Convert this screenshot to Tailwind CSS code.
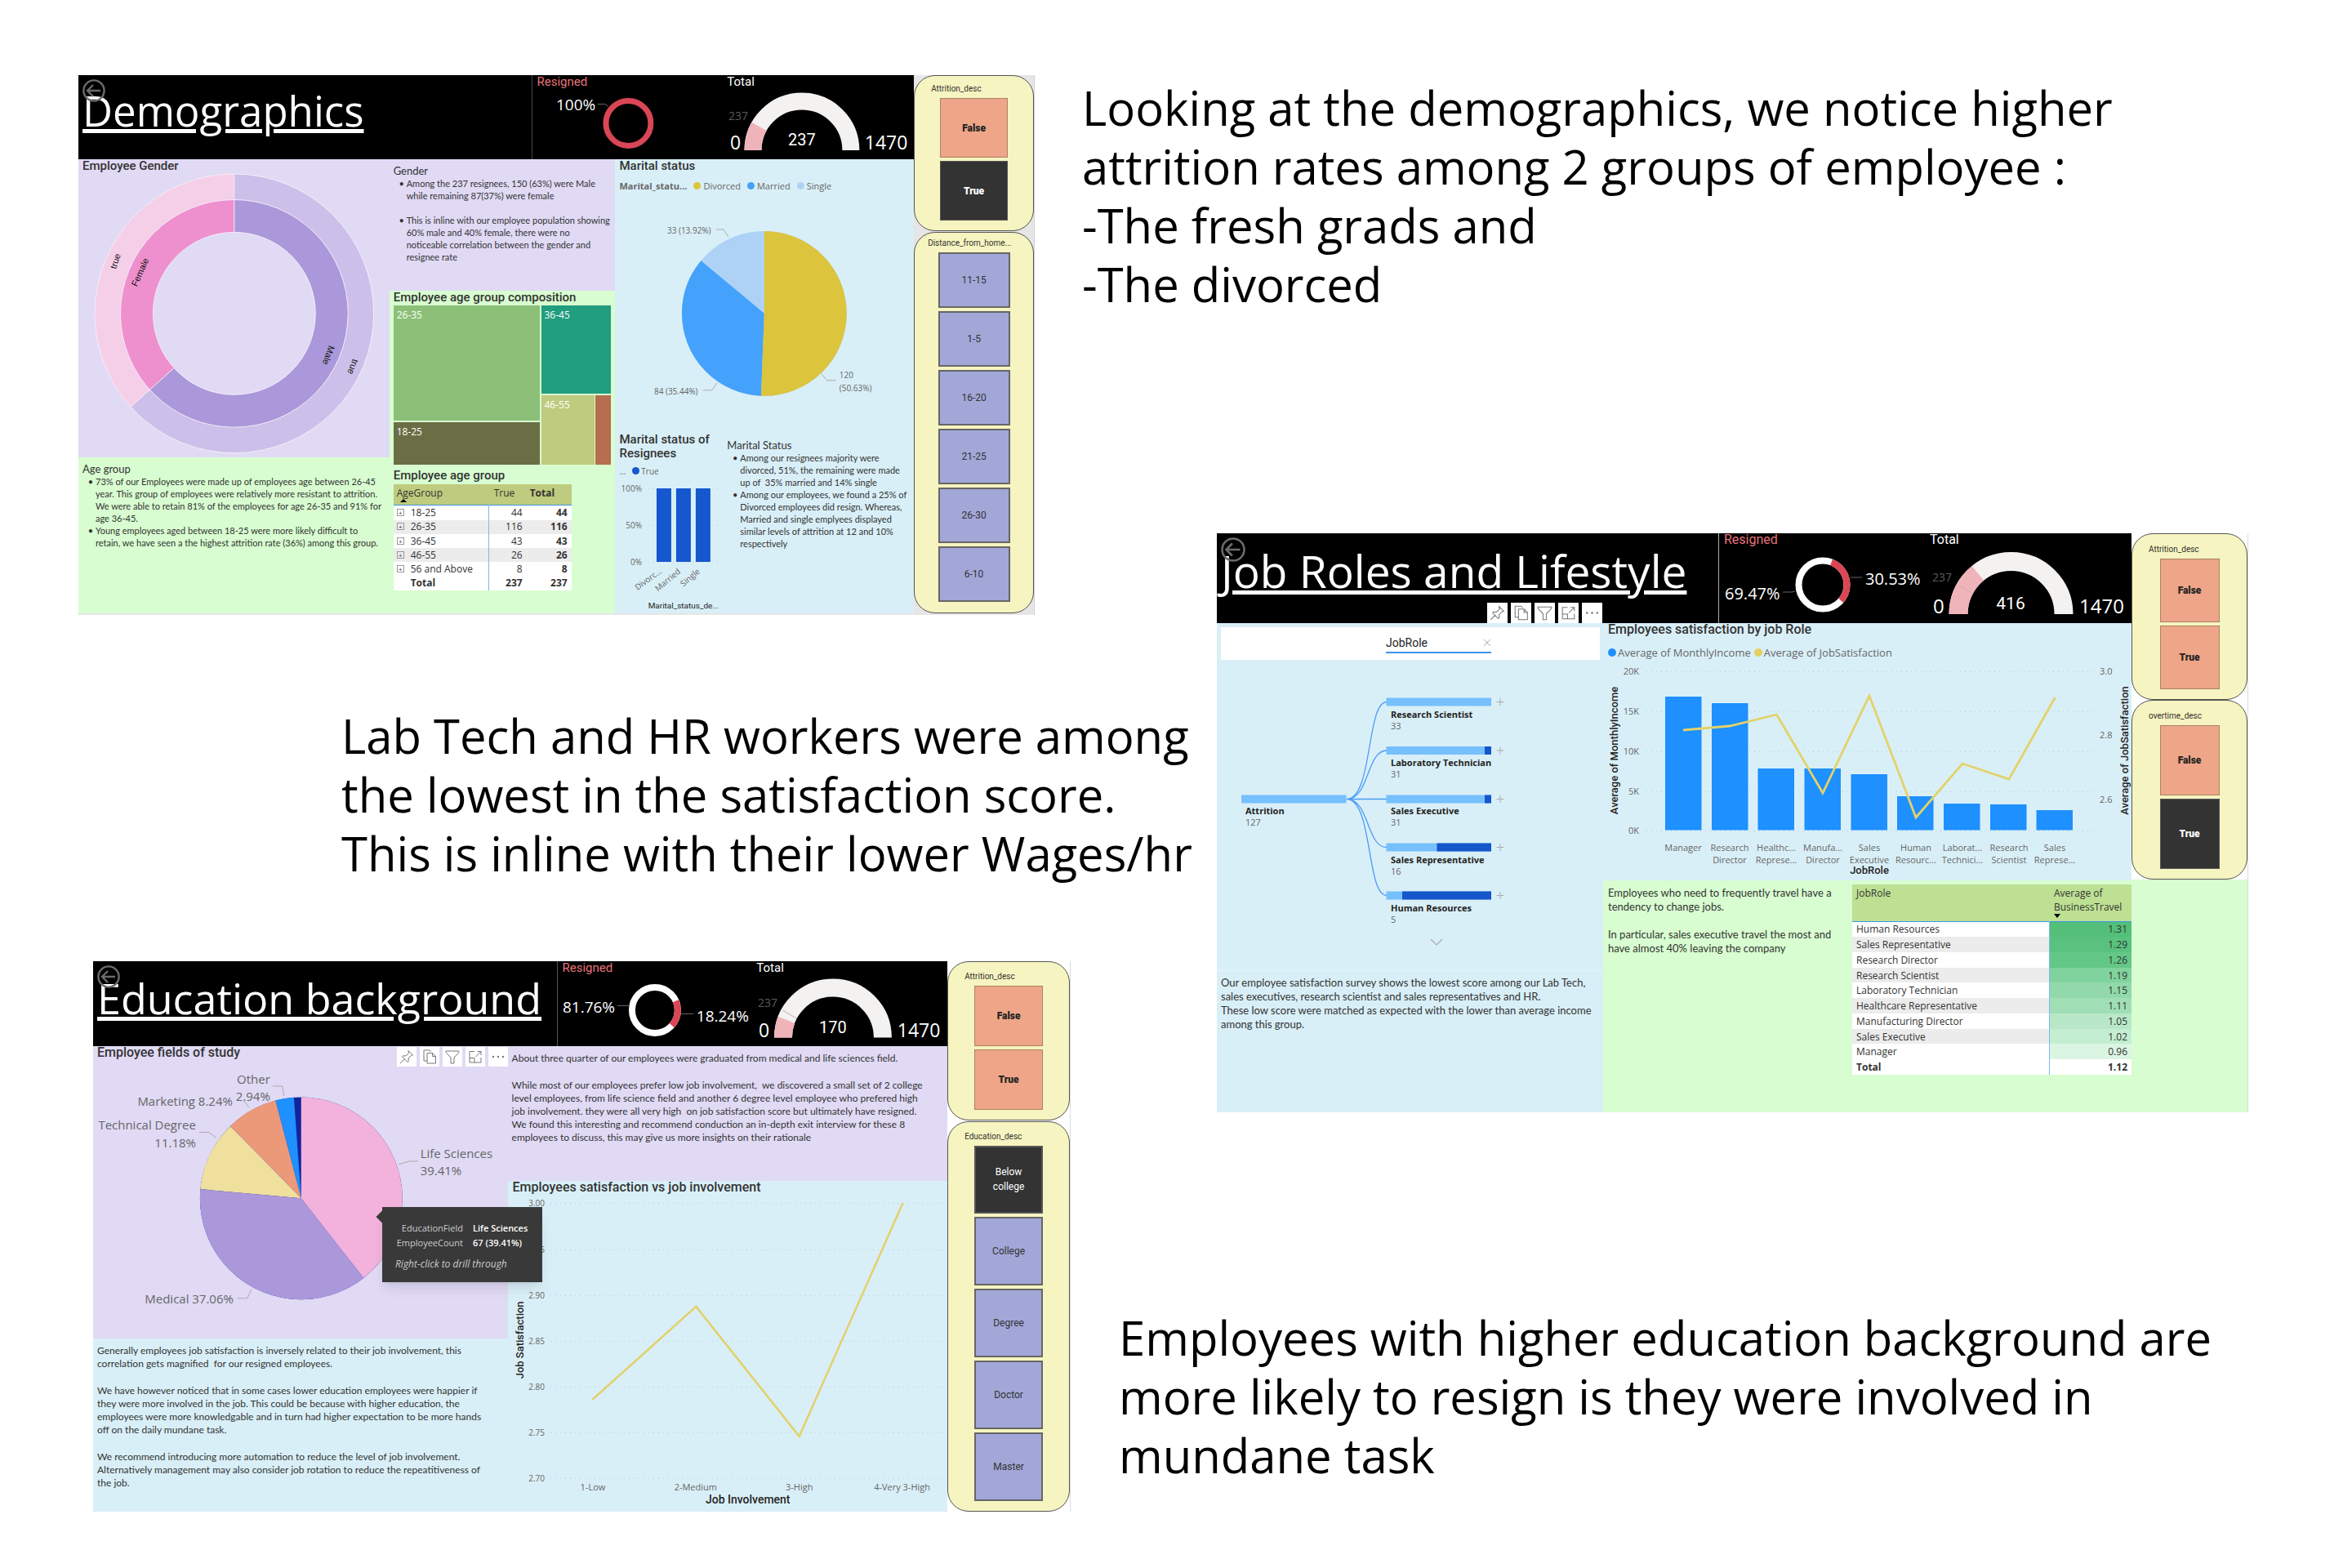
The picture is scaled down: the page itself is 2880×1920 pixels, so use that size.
<!DOCTYPE html>
<html lang="en">
<head>
<meta charset="utf-8">
<title>Employee attrition findings</title>
<script src="https://cdn.jsdelivr.net/npm/@tailwindcss/browser@4"></script>
</head>
<body class="bg-white font-['Open_Sans',sans-serif] text-[#333]">

<svg class="hidden" aria-hidden="true">
  <symbol id="back" viewBox="0 0 28 28"><g fill="none" stroke="#6b6b6b" stroke-width="2.4"><circle cx="14" cy="14" r="12.6"/><path d="M22 14H6.5M13 7l-7 7 7 7"/></g></symbol>
  <symbol id="pin" viewBox="0 0 24 24"><path fill="none" stroke="#777" d="M14 4.500l5.500 5.500-2 .5-3.500 3.500.2 3.500-1.200 1-6.500-6.500 1-1.200 3.500.2 3.500-3.500zM9.500 14.500L4 20"/></symbol>
  <symbol id="copy" viewBox="0 0 24 24"><path fill="none" stroke="#777" d="M9 17H5V4h7l2 2M9 7.500h6.500l4 4V20H9zM15.500 7.500v4h4"/></symbol>
  <symbol id="filter" viewBox="0 0 24 24"><path fill="none" stroke="#777" d="M4 5h16v1.500l-6 6.500v7h-4v-7L4 6.500z"/></symbol>
  <symbol id="focus" viewBox="0 0 24 24"><path fill="none" stroke="#777" d="M11 5.500H5V19h14v-6M5 13.500h6V19M12.500 12L19 5.500M14.500 5.500H19V10"/></symbol>
  <symbol id="more" viewBox="0 0 24 24"><g fill="#777"><circle cx="6" cy="12" r="1.200"/><circle cx="12" cy="12" r="1.200"/><circle cx="18" cy="12" r="1.200"/></g></symbol>
</svg>

<main class="grid min-h-screen grid-cols-[minmax(0,1325fr)_minmax(0,1555fr)]">

<div class="flex flex-col">

  <!-- Demographics -->
  <section class="mt-[92px] mr-[58px] ml-24 grid grid-cols-[minmax(0,1024fr)_minmax(0,147fr)] border-r border-[#d0d0d0] bg-[#e6e6e6] pb-[2px]">
    <div class="flex flex-col">
      <header class="grid grid-cols-[minmax(0,556fr)_minmax(0,233fr)_minmax(0,235fr)] bg-black text-white">
        <div class="relative border-r border-[#444] pl-[5px]">
          <h1 class="text-[51px] leading-[86px] whitespace-nowrap underline decoration-[5px] underline-offset-[3px]">Demographics</h1>
          <button aria-label="Back" class="absolute top-[5px] left-[5px] size-7"><svg class="size-7"><use href="#back"/></svg></button>
        </div>
        <div>
          <h2 class="pl-1.5 font-['Roboto',sans-serif] text-[15px] leading-4 text-[#e8737a]">Resigned</h2>
          <svg class="block w-full" viewBox="652 108 233 87">
            <text x="681" y="135" font-size="19" fill="#fff">100%</text>
            <path d="M732 127.500h9l4 3" fill="none" stroke="#666"/>
            <circle cx="769.500" cy="151" r="27.500" fill="none" stroke="#da4656" stroke-width="7"/>
          </svg>
        </div>
        <div>
          <h2 class="pl-1.5 font-['Roboto',sans-serif] text-[15px] leading-4">Total</h2>
          <svg class="block w-full" viewBox="885 108 235 87">
            <g fill="none" stroke-width="21"><path d="M923 184a60 60 0 0 1 120 0" stroke="#f3f2f1"/><path d="M923 184a60 60 0 0 1 120 0" stroke="#efb4ba" pathLength="100" stroke-dasharray="16.100 100"/></g>
            <text x="893" y="147" font-size="14" fill="#5a5a5a">237</text>
            <g fill="#fff"><text x="895" y="183" font-size="23">0</text><text x="1060" y="183" font-size="23">1470</text>
            <text x="983" y="178" font-size="20" text-anchor="middle" class="font-['Roboto',sans-serif]">237</text></g>
          </svg>
        </div>
      </header>

      <div class="grid flex-1 grid-cols-[minmax(0,381fr)_minmax(0,277fr)_minmax(0,366fr)] text-[11px] leading-[15px]">
        <div class="flex flex-col">
          <div class="bg-[#e0daf5]">
            <h2 class="pl-[5px] font-['Roboto',sans-serif] text-[15px] leading-4 font-medium">Employee Gender</h2>
            <svg class="block w-full" viewBox="96 211 381 349">
              <g transform="translate(287 384) rotate(-90)" fill="none">
                <circle r="155" stroke="#ccbfe9" stroke-width="32"/>
                <circle r="155" stroke="#f5cfe8" stroke-width="32" pathLength="100" stroke-dasharray="36.700 100" stroke-dashoffset="-63.300"/>
                <circle r="119.500" stroke="#ab98da" stroke-width="40"/>
                <circle r="119.500" stroke="#ee90cd" stroke-width="40" pathLength="100" stroke-dasharray="36.700 100" stroke-dashoffset="-63.300"/>
                <g stroke="#f6ecfa"><circle r="171"/><circle r="139.500"/><circle r="99.500"/><path d="M99.500 0H171"/></g>
              </g>
              <path d="M213 451L160 498.500" stroke="#f6ecfa"/>
              <g font-size="11" fill="#111" text-anchor="middle" class="font-['Liberation_Sans',sans-serif]">
                <text transform="translate(175 335) rotate(-66)">Female</text>
                <text transform="translate(145 321) rotate(-72)">true</text>
                <text transform="translate(399 434) rotate(110)">Male</text>
                <text transform="translate(429 448) rotate(110)">true</text>
              </g>
            </svg>
          </div>
          <div class="flex-1 bg-[#d8fdd0] pt-1.5 pl-[5px] font-['Lato',sans-serif]">
            <h3 class="text-[13px] leading-4">Age group</h3>
            <ul class="list-['•_'] pl-4 whitespace-nowrap">
              <li>73% of our Employees were made up of employees age between 26-45<br>year. This group of employees were relatively more resistant to attrition.<br>We were able to retain 81% of the employees for age 26-35 and 91% for<br>age 36-45.</li>
              <li>Young employees aged between 18-25 were more likely difficult to<br>retain, we have seen a the highest attrition rate (36%) among this group.</li>
            </ul>
          </div>
        </div>

        <div class="flex flex-col">
          <div class="bg-[#e0daf5] pt-1.5 pb-[34px] pl-[5px] font-['Lato',sans-serif]">
            <h3 class="text-[13px] leading-4">Gender</h3>
            <ul class="list-['•_'] pl-4 whitespace-nowrap">
              <li>Among the 237 resignees, 150 (63%) were Male<br>while remaining 87(37%) were female</li>
              <li class="mt-[15px]">This is inline with our employee population showing<br>60% male and 40% female, there were no<br>noticeable correlation between the gender and<br>resignee rate</li>
            </ul>
          </div>
          <div class="flex-1 bg-[#d8fdd0] px-[5px]">
            <h2 class="pb-0.5 font-['Roboto',sans-serif] text-[15px] leading-4 font-medium whitespace-nowrap">Employee age group composition</h2>
            <div class="grid h-[195px] grid-cols-[179fr_86fr] gap-0.5 text-[12px] leading-6 text-white">
              <div class="grid grid-rows-[141fr_52fr] gap-0.5">
                <div class="bg-[#8cc078] pl-1">26-35</div>
                <div class="bg-[#6b6d45] pl-1">18-25</div>
              </div>
              <div class="grid grid-rows-[109fr_85fr] gap-0.5">
                <div class="bg-[#219d7f] pl-1">36-45</div>
                <div class="grid grid-cols-[66fr_19fr] gap-px"><div class="bg-[#bfcb7e] pl-1">46-55</div><div class="bg-[#b66d50]"></div></div>
              </div>
            </div>
            <h2 class="pt-[5px] pb-[3px] font-['Roboto',sans-serif] text-[15px] leading-4 font-medium">Employee age group</h2>
            <table class="h-[130px] w-[218px] table-fixed bg-white text-[12px] leading-[14px]">
              <colgroup><col class="w-[117px]"><col class="w-[46px]"><col class="w-[55px]"></colgroup>
              <thead><tr class="h-[26px] border-b border-[#3a96e8] bg-[#bfcb7e] text-left align-top">
                <th class="pt-1 pl-1 font-normal">AgeGroup<svg class="ml-1 block h-1 w-2" viewBox="0 0 8 4"><path d="M0 4l4-4 4 4z"/></svg></th><th class="pt-1 pl-1.5 font-normal">True</th><th class="pt-1 pl-1 font-bold">Total</th></tr></thead>
              <tbody class="text-right">
                <tr><th class="border-r border-[#7db9ee] pl-1 text-left font-normal"><span class="mr-2 inline-block size-[9px] border border-[#999] text-center align-[1px] text-[8px] leading-[7px]">+</span>18-25</th><td class="pr-[5px]">44</td><td class="pr-[5px] font-bold">44</td></tr>
                <tr class="bg-[#ececec]"><th class="border-r border-[#7db9ee] pl-1 text-left font-normal"><span class="mr-2 inline-block size-[9px] border border-[#999] text-center align-[1px] text-[8px] leading-[7px]">+</span>26-35</th><td class="pr-[5px]">116</td><td class="pr-[5px] font-bold">116</td></tr>
                <tr><th class="border-r border-[#7db9ee] pl-1 text-left font-normal"><span class="mr-2 inline-block size-[9px] border border-[#999] text-center align-[1px] text-[8px] leading-[7px]">+</span>36-45</th><td class="pr-[5px]">43</td><td class="pr-[5px] font-bold">43</td></tr>
                <tr class="bg-[#ececec]"><th class="border-r border-[#7db9ee] pl-1 text-left font-normal"><span class="mr-2 inline-block size-[9px] border border-[#999] text-center align-[1px] text-[8px] leading-[7px]">+</span>46-55</th><td class="pr-[5px]">26</td><td class="pr-[5px] font-bold">26</td></tr>
                <tr><th class="border-r border-[#7db9ee] pl-1 text-left font-normal whitespace-nowrap"><span class="mr-2 inline-block size-[9px] border border-[#999] text-center align-[1px] text-[8px] leading-[7px]">+</span>56 and Above</th><td class="pr-[5px]">8</td><td class="pr-[5px] font-bold">8</td></tr>
                <tr class="font-bold"><th class="border-r border-[#7db9ee] pl-[21px] text-left">Total</th><td class="pr-[5px]">237</td><td class="pr-[5px]">237</td></tr>
              </tbody>
            </table>
          </div>
        </div>

        <div class="bg-[#d9eff7]">
          <h2 class="pl-[5px] font-['Roboto',sans-serif] text-[15px] leading-4 font-medium">Marital status</h2>
          <div class="mt-[9px] flex items-center gap-2 pl-[5px] text-[11px] leading-4 whitespace-nowrap text-[#666]">
            <b>Marital_statu...</b>
            <span class="flex items-center gap-[3px]"><i class="size-[9px] rounded-full bg-[#dcc43c]"></i>Divorced</span>
            <span class="flex items-center gap-[3px]"><i class="size-[9px] rounded-full bg-[#45a2fc]"></i>Married</span>
            <span class="flex items-center gap-[3px]"><i class="size-[9px] rounded-full bg-[#aed2f6]"></i>Single</span>
          </div>
          <svg class="block w-full" viewBox="754 236 366 287">
            <g transform="translate(937 384) rotate(-90)" fill="none" stroke-width="101">
              <circle r="50.500" stroke="#aed2f6"/>
              <circle r="50.500" stroke="#45a2fc" pathLength="100" stroke-dasharray="35.440 100" stroke-dashoffset="-50.630"/>
              <circle r="50.500" stroke="#dcc43c" pathLength="100" stroke-dasharray="50.630 100"/>
            </g>
            <path d="M878 281h9l6 9M862 478h11l6-9M1007 458l7 8h11" fill="none" stroke="#aaa"/>
            <g font-size="10" fill="#666"><text x="818" y="286">33 (13.92%)</text><text x="802" y="483">84 (35.44%)</text><text x="1029" y="463">120</text><text x="1029" y="479">(50.63%)</text></g>
          </svg>
          <div class="grid grid-cols-[minmax(0,132fr)_minmax(0,234fr)]">
            <div>
              <h2 class="pt-[7px] pl-[5px] font-['Roboto',sans-serif] text-[15px] leading-[17px] font-medium whitespace-nowrap">Marital status of<br>Resignees</h2>
              <div class="mt-[5px] flex items-center gap-2 pl-[5px] text-[10px] leading-4 text-[#666]"><span>...</span><span class="flex items-center gap-0.5"><i class="size-[9px] rounded-full bg-[#1557cf]"></i>True</span></div>
              <svg class="block w-full overflow-visible" viewBox="754 585 132 166">
                <path d="M795 598.500h86M795 643.500h86M795 688.500h86" stroke="#bcd3dc" stroke-dasharray="1 5"/>
                <g font-size="10" fill="#666" text-anchor="end"><text x="787" y="602">100%</text><text x="787" y="647">50%</text><text x="787" y="692">0%</text>
                <text transform="translate(812 701) rotate(-36)">Divorc...</text><text transform="translate(835 701) rotate(-40)">Married</text><text transform="translate(859 701) rotate(-40)">Single</text></g>
                <path d="M805 598h18v90h-18zM829 598h18v90h-18zM853 598h18v90h-18z" fill="#1557cf"/>
                <text x="838" y="745" font-size="10" text-anchor="middle" fill="#222" class="font-['Roboto',sans-serif]">Marital_status_de...</text>
              </svg>
            </div>
            <div class="pt-[14px] pl-[5px] font-['Lato',sans-serif]">
              <h3 class="text-[13px] leading-4">Marital Status</h3>
              <ul class="list-['•_'] pl-4 whitespace-nowrap">
                <li>Among our resignees majority were<br>divorced, 51%, the remaining were made<br>up of &nbsp;35% married and 14% single</li>
                <li>Among our employees, we found a 25% of<br>Divorced employees did resign. Whereas,<br>Married and single emplyees displayed<br>similar levels of attrition at 12 and 10%<br>respectively</li>
              </ul>
            </div>
          </div>
        </div>
      </div>
    </div>

    <aside class="flex flex-col gap-px font-['Roboto',sans-serif] text-[12px]">
      <div class="flex flex-col items-center gap-1 rounded-[26px] border border-[#555] bg-[#f6f4c0] pt-[9px] pb-3">
        <h3 class="w-full pl-5 text-[10px] leading-[14px]">Attrition_desc</h3>
        <button class="h-[73px] w-[83px] border border-[#a98263] bg-[#eea588] font-black text-[#222]">False</button>
        <button class="h-[73px] w-[83px] border border-[#555] bg-[#333] font-black text-white">True</button>
      </div>
      <div class="flex flex-1 flex-col items-center gap-1 rounded-[26px] border border-[#555] bg-[#f6f4c0] pt-1.5 pb-3">
        <h3 class="w-full pl-4 text-[10px] leading-[14px]">Distance_from_home...</h3>
        <button class="w-[88px] flex-1 border-2 border-[#666] bg-[#a2a7d8]">11-15</button>
        <button class="w-[88px] flex-1 border-2 border-[#666] bg-[#a2a7d8]">1-5</button>
        <button class="w-[88px] flex-1 border-2 border-[#666] bg-[#a2a7d8]">16-20</button>
        <button class="w-[88px] flex-1 border-2 border-[#666] bg-[#a2a7d8]">21-25</button>
        <button class="w-[88px] flex-1 border-2 border-[#666] bg-[#a2a7d8]">26-30</button>
        <button class="w-[88px] flex-1 border-2 border-[#666] bg-[#a2a7d8]">6-10</button>
      </div>
    </aside>
  </section>

  <p class="mt-[112px] pl-[418px] text-[58px] leading-[72px] whitespace-nowrap text-black">Lab Tech and HR workers were among<br>the lowest in the satisfaction score.<br>This is inline with their lower Wages/hr</p>

  <!-- Education background -->
  <section class="mt-24 mr-[14px] ml-[114px] grid grid-cols-[minmax(0,1047fr)_minmax(0,150fr)] border-r border-[#ddd]">
    <div class="flex flex-col">
      <header class="grid grid-cols-[minmax(0,569fr)_minmax(0,240fr)_minmax(0,238fr)] bg-black text-white">
        <div class="relative border-r border-[#555] pl-[5px]">
          <h1 class="text-[52px] leading-[90px] whitespace-nowrap underline decoration-[5px] underline-offset-[3px]">Education background</h1>
          <button aria-label="Back" class="absolute top-[5px] left-[5px] size-7"><svg class="size-7"><use href="#back"/></svg></button>
        </div>
        <div>
          <h2 class="pl-1.5 font-['Roboto',sans-serif] text-[15px] leading-4 text-[#e8737a]">Resigned</h2>
          <svg class="block w-full" viewBox="683 1194 240 89">
            <g transform="translate(802 1238) rotate(-90)" fill="none" stroke-width="8"><circle r="28" stroke="#fff"/><circle r="28" stroke="#da4656" pathLength="360" stroke-dasharray="66 360" stroke-dashoffset="-66"/></g>
            <path d="M756 1232.500h14M834 1242.500h15" stroke="#666"/>
            <g font-size="19" fill="#fff"><text x="689" y="1241">81.76%</text><text x="853" y="1252">18.24%</text></g>
          </svg>
        </div>
        <div>
          <h2 class="pl-1 font-['Roboto',sans-serif] text-[15px] leading-4">Total</h2>
          <svg class="block w-full" viewBox="923 1194 238 89">
            <g fill="none" stroke-width="22"><path d="M960 1271.500a61 61 0 0 1 122 0" stroke="#f3f2f1"/><path d="M960 1271.500a61 61 0 0 1 122 0" stroke="#efb4ba" pathLength="100" stroke-dasharray="11.600 100"/></g>
            <path d="M959 1238l17 10" stroke="#ccc" stroke-width="1.500"/>
            <text x="929" y="1234" font-size="14" fill="#5a5a5a">237</text>
            <g fill="#fff"><text x="930" y="1271" font-size="23">0</text><text x="1100" y="1271" font-size="23">1470</text>
            <text x="1021" y="1266" font-size="20" text-anchor="middle" class="font-['Roboto',sans-serif]">170</text></g>
          </svg>
        </div>
      </header>

      <div class="relative grid flex-1 grid-cols-[minmax(0,508fr)_minmax(0,539fr)] text-[12px] leading-4">
        <div class="flex flex-col">
          <div class="relative bg-[#e0daf5]">
            <h2 class="pl-[5px] font-['Roboto',sans-serif] text-[16px] leading-4 font-medium">Employee fields of study</h2>
            <div class="absolute top-px right-0 flex gap-1">
              <button aria-label="Pin" class="size-6 bg-white"><svg class="size-6"><use href="#pin"/></svg></button>
              <button aria-label="Copy" class="size-6 bg-white"><svg class="size-6"><use href="#copy"/></svg></button>
              <button aria-label="Filter" class="size-6 bg-white"><svg class="size-6"><use href="#filter"/></svg></button>
              <button aria-label="Focus mode" class="size-6 bg-white"><svg class="size-6"><use href="#focus"/></svg></button>
              <button aria-label="More options" class="size-6 bg-white"><svg class="size-6"><use href="#more"/></svg></button>
            </div>
            <svg class="block w-full" viewBox="114 1299 508 342">
              <g transform="translate(369 1469.500) rotate(-90)" fill="none" stroke-width="124">
                <circle r="62" stroke="#12239e"/>
                <circle r="62" stroke="#1e90ff" pathLength="100" stroke-dasharray="2.940 100" stroke-dashoffset="-95.890"/>
                <circle r="62" stroke="#ec997a" pathLength="100" stroke-dasharray="8.240 100" stroke-dashoffset="-87.650"/>
                <circle r="62" stroke="#f0e09e" pathLength="100" stroke-dasharray="11.180 100" stroke-dashoffset="-76.470"/>
                <circle r="62" stroke="#ab98da" pathLength="100" stroke-dasharray="37.060 100" stroke-dashoffset="-39.410"/>
                <circle r="62" stroke="#f2b2dc" pathLength="100" stroke-dasharray="39.410 100"/>
              </g>
              <path d="M334 1332h12l2 12M299 1350l6 8M244 1388.500h12l9 7M488 1428l14-4h10M291 1592h12l5-11" fill="none" stroke="#aaa"/>
              <g font-size="15" fill="#666"><g text-anchor="end"><text x="331" y="1329">Other</text><text x="331" y="1350">2.94%</text><text x="285" y="1356">Marketing 8.24%</text><text x="240" y="1385">Technical Degree</text><text x="240" y="1407">11.18%</text><text x="286" y="1598">Medical 37.06%</text></g>
              <text x="515" y="1420">Life Sciences</text><text x="515" y="1441">39.41%</text></g>
            </svg>
          </div>
          <div class="flex flex-1 flex-col gap-[17px] bg-[#d9eff7] pt-[7px] pl-[5px] font-['Lato',sans-serif] whitespace-nowrap">
            <p>Generally employees job satisfaction is inversely related to their job involvement, this<br>correlation gets magnified &nbsp;for our resigned employees.</p>
            <p>We have however noticed that in some cases lower education employees were happier if<br>they were more involved in the job. This could be because with higher education, the<br>employees were more knowledgable and in turn had higher expectation to be more hands<br>off on the daily mundane task.</p>
            <p>We recommend introducing more automation to reduce the level of job involvement.<br>Alternatively management may also consider job rotation to reduce the repeatitiveness of<br>the job.</p>
          </div>
        </div>
        <div class="flex flex-col">
          <div class="flex flex-col gap-[17px] bg-[#e0daf5] pt-[7px] pb-[45px] pl-[5px] font-['Lato',sans-serif] whitespace-nowrap">
            <p>About three quarter of our employees were graduated from medical and life sciences field.</p>
            <p>While most of our employees prefer low job involvement, &nbsp;we discovered a small set of 2 college<br>level employees, from life science field and another 6 degree level employee who prefered high<br>job involvement. they were all very high &nbsp;on job satisfaction score but ultimately have resigned.<br>We found this interesting and recommend conduction an in-depth exit interview for these 8<br>employees to discuss, this may give us more insights on their rationale</p>
          </div>
          <div class="flex-1 bg-[#d9eff7]">
            <h2 class="pl-1.5 font-['Roboto',sans-serif] text-[16px] leading-4 font-medium">Employees satisfaction vs job involvement</h2>
            <svg class="block w-full" viewBox="622 1464 539 389">
              <path d="M674 1475.500h482M674 1532.500h482M674 1588.500h482M674 1644.500h482M674 1700.500h482M674 1756.500h482M674 1812.500h482" stroke="#b5cad3" stroke-dasharray="1 5"/>
              <g font-size="10" fill="#666"><g text-anchor="end"><text x="667" y="1479">3.00</text><text x="667" y="1536">2.95</text><text x="667" y="1592">2.90</text><text x="667" y="1648">2.85</text><text x="667" y="1704">2.80</text><text x="667" y="1760">2.75</text><text x="667" y="1816">2.70</text></g>
              <g text-anchor="middle" font-size="11"><text x="726" y="1827">1-Low</text><text x="852" y="1827">2-Medium</text><text x="979" y="1827">3-High</text><text x="1105" y="1827">4-Very 3-High</text></g></g>
              <path d="M725.500 1716L852.500 1602 979 1761l127-286" fill="none" stroke="#e2d16a" stroke-width="2.500"/>
              <g fill="#252423" text-anchor="middle" font-weight="500" class="font-['Roboto',sans-serif]"><text font-size="13" transform="translate(641 1643) rotate(-90)">Job Satisfaction</text><text font-size="14" x="916" y="1843">Job Involvement</text></g>
            </svg>
          </div>
        </div>
        <div role="tooltip" class="absolute top-[197px] left-[354px] grid h-[92px] w-[196px] grid-cols-[99px_1fr] content-center gap-x-3 gap-y-[2px] bg-[#393939] pt-1 text-[11px] leading-4 whitespace-nowrap text-[#ccc] shadow-lg">
          <i class="absolute top-[6px] -left-[5px] size-3 rotate-45 bg-[#393939]"></i>
          <span class="text-right">EducationField</span><b class="font-semibold text-white">Life Sciences</b>
          <span class="text-right">EmployeeCount</span><b class="font-semibold text-white">67 (39.41%)</b>
          <em class="col-span-2 pt-2 pl-4 text-[12px]">Right-click to drill through</em>
        </div>
      </div>
    </div>

    <aside class="flex flex-col gap-px font-['Roboto',sans-serif] text-[12px]">
      <div class="flex flex-col items-center gap-1 rounded-[26px] border border-[#555] bg-[#f6f4c0] pt-[11px] pb-3">
        <h3 class="w-full pl-5 text-[10px] leading-[14px]">Attrition_desc</h3>
        <button class="h-[74px] w-[84px] border border-[#a98263] bg-[#eea588] font-black text-[#222]">False</button>
        <button class="h-[74px] w-[84px] border border-[#a98263] bg-[#eea588] font-black text-[#222]">True</button>
      </div>
      <div class="flex flex-1 flex-col items-center gap-1 rounded-[26px] border border-[#555] bg-[#f6f4c0] pt-[11px] pb-3">
        <h3 class="w-full pl-5 text-[10px] leading-[14px]">Education_desc</h3>
        <button class="w-[84px] flex-1 border-2 border-[#555] bg-[#333] leading-[18px] text-white">Below<br>college</button>
        <button class="w-[84px] flex-1 border-2 border-[#666] bg-[#a2a7d8]">College</button>
        <button class="w-[84px] flex-1 border-2 border-[#666] bg-[#a2a7d8]">Degree</button>
        <button class="w-[84px] flex-1 border-2 border-[#666] bg-[#a2a7d8]">Doctor</button>
        <button class="w-[84px] flex-1 border-2 border-[#666] bg-[#a2a7d8]">Master</button>
      </div>
    </aside>
  </section>
</div>

<div class="flex flex-col">
  <p class="mt-[96px] text-[58px] leading-[72px] whitespace-nowrap text-black">Looking at the demographics, we notice higher<br>attrition rates among 2 groups of employee :<br>-The fresh grads and<br>-The divorced</p>

  <!-- Job Roles and Lifestyle -->
  <section class="mt-[269px] mr-[127px] ml-[165px] grid grid-cols-[minmax(0,1120fr)_minmax(0,142fr)] border-r border-[#ddd]">
    <div class="flex flex-col">
      <header class="grid grid-cols-[minmax(0,615fr)_minmax(0,255fr)_minmax(0,250fr)] bg-black text-white">
        <div class="relative border-r border-[#aaa] pl-[5px]">
          <h1 class="text-[55px] leading-[92px] whitespace-nowrap underline decoration-[5px] underline-offset-[3px]">Job Roles and Lifestyle</h1>
          <button aria-label="Back" class="absolute top-[5px] left-[5px] size-[30px]"><svg class="size-[30px]"><use href="#back"/></svg></button>
          <div class="absolute right-[142px] bottom-0 flex gap-1">
            <button aria-label="Pin" class="size-[25px] bg-white"><svg class="size-[25px]"><use href="#pin"/></svg></button>
            <button aria-label="Copy" class="size-[25px] bg-white"><svg class="size-[25px]"><use href="#copy"/></svg></button>
            <button aria-label="Filter" class="size-[25px] bg-white"><svg class="size-[25px]"><use href="#filter"/></svg></button>
            <button aria-label="Focus mode" class="size-[25px] bg-white"><svg class="size-[25px]"><use href="#focus"/></svg></button>
            <button aria-label="More options" class="size-[25px] bg-white"><svg class="size-[25px]"><use href="#more"/></svg></button>
          </div>
        </div>
        <div>
          <h2 class="pl-1.5 font-['Roboto',sans-serif] text-[16px] leading-4 text-[#e8737a]">Resigned</h2>
          <svg class="block w-full" viewBox="2105 669 255 94">
            <g transform="translate(2232 716) rotate(-90)" fill="none" stroke-width="8"><circle r="29.500" stroke="#fff"/><circle r="29.500" stroke="#da4656" pathLength="360" stroke-dasharray="110 360" stroke-dashoffset="-21"/></g>
            <path d="M2183 725h11l4-1M2266 707h14" fill="none" stroke="#666"/>
            <g font-size="20" fill="#fff"><text x="2112" y="734">69.47%</text><text x="2284" y="716">30.53%</text></g>
          </svg>
        </div>
        <div>
          <h2 class="pl-[3px] font-['Roboto',sans-serif] text-[16px] leading-4">Total</h2>
          <svg class="block w-full" viewBox="2360 669 250 94">
            <g fill="none" stroke-width="23"><path d="M2398 752a64.500 64.500 0 0 1 129 0" stroke="#f3f2f1"/><path d="M2398 752a64.500 64.500 0 0 1 129 0" stroke="#efb4ba" pathLength="100" stroke-dasharray="28.300 100"/></g>
            <path d="M2400 718l16 9" stroke="#ddb0b4" stroke-width="1.500"/>
            <text x="2366" y="712" font-size="14" fill="#5a5a5a">237</text>
            <g fill="#fff"><text x="2367" y="751" font-size="24">0</text><text x="2546" y="751" font-size="24">1470</text>
            <text x="2462" y="746" font-size="21" text-anchor="middle" class="font-['Roboto',sans-serif]">416</text></g>
          </svg>
        </div>
      </header>

      <div class="grid flex-1 grid-cols-[minmax(0,473fr)_minmax(0,647fr)] text-[12px] leading-[17px]">
        <div class="bg-[#d9eff7]">
          <div class="pt-[5px] pr-1 pl-[5px]">
            <div class="h-10 bg-white pl-[202px]">
              <div class="flex h-8 w-[129px] items-center justify-between border-b-2 border-[#3f92ec] pt-2 font-['Roboto',sans-serif] text-[14px] text-[#222]">JobRole<button aria-label="Remove JobRole" class="text-[#aaa]"><svg class="size-[10px]" viewBox="0 0 10 10"><path d="M1 1l8 8M9 1L1 9" stroke="#aaa"/></svg></button></div>
            </div>
          </div>
          <svg class="block w-full" viewBox="1490 809 473 380">
            <g fill="none" stroke="#4b9cf5" stroke-width="1.300"><path d="M1649 979.500c32 0 24-119 49-119M1649 979.500c28 0 24-59.500 49-59.500M1649 979.500h49M1649 979.500c28 0 24 59 49 59M1649 979.500c32 0 24 118 49 118"/></g>
            <g fill="#76c0fd"><path d="M1520 974.500h128.500v10H1520zM1697.500 855.500H1826v10h-128.500zM1697.500 915H1826v10h-128.500zM1697.500 974.500H1826v10h-128.500zM1697.500 1033.500H1826v10h-128.500zM1697.500 1092.500H1826v10h-128.500z"/></g>
            <path fill="#1557cb" d="M1818 915h8v10h-8zM1818 974.500h8v10h-8zM1759.500 1033.500h66.500v10h-66.500zM1717 1092.500h109v10h-109z"/>
            <path d="M1832.500 860.500h9m-4.500-4.500v9M1832.500 920h9m-4.500-4.500v9M1832.500 979.500h9m-4.500-4.500v9M1832.500 1038.500h9m-4.500-4.500v9M1832.500 1097.500h9m-4.500-4.500v9" stroke="#aaa"/>
            <path d="M1752 1151l7 7 7-7" fill="none" stroke="#aaa" stroke-width="1.200"/>
            <g font-size="11" font-weight="700" fill="#222"><text x="1525" y="998">Attrition</text><text x="1703" y="880">Research Scientist</text><text x="1703" y="939">Laboratory Technician</text><text x="1703" y="998">Sales Executive</text><text x="1703" y="1058">Sales Representative</text><text x="1703" y="1117">Human Resources</text></g>
            <g font-size="11" fill="#666"><text x="1525" y="1012">127</text><text x="1703" y="894">33</text><text x="1703" y="953">31</text><text x="1703" y="1012">31</text><text x="1703" y="1072">16</text><text x="1703" y="1131">5</text></g>
          </svg>
          <p class="border-t border-[#e6f4fa] pt-1.5 pl-[5px] font-['Lato',sans-serif] text-[13px] whitespace-nowrap">Our employee satisfaction survey shows the lowest score among our Lab Tech,<br>sales executives, research scientist and sales representatives and HR.<br>These low score were matched as expected with the lower than average income<br>among this group.</p>
        </div>

        <div class="flex flex-col">
          <div class="bg-[#d9eff7]">
            <h2 class="pl-1.5 font-['Roboto',sans-serif] text-[16px] leading-4 font-medium">Employees satisfaction by job Role</h2>
            <div class="mt-3 flex items-center gap-1 pl-1.5 text-[13px] leading-4 whitespace-nowrap text-[#666]">
              <span class="flex items-center gap-0.5"><i class="size-[10px] rounded-full bg-[#1e90ff]"></i>Average of MonthlyIncome</span>
              <span class="flex items-center gap-0.5"><i class="size-[10px] rounded-full bg-[#e3d060]"></i>Average of JobSatisfaction</span>
            </div>
            <svg class="block w-full" viewBox="1963 808 647 271">
              <path d="M2016 823.500h547M2016 872.500h547M2016 921.500h547M2016 970.500h547M2016 1018.500h547" stroke="#b5cad3" stroke-dasharray="1 5"/>
              <path fill="#1e90ff" d="M2039 854h44.500v163.500H2039zM2096 862h44.500v155.500H2096zM2152.500 942h44.500v75.500h-44.500zM2209.500 942h44.500v75.500h-44.500zM2266.500 949h44.500v68.500h-44.500zM2323 976h44.500v41.500H2323zM2380 985h44.500v32.500H2380zM2437 986h44.500v31.500H2437zM2493.500 993h44.500v24.500h-44.500z"/>
              <path d="M2061 895l57-5 57.500-14 56.500 96 57-119 57 149 57-66 57 19 56.500-100" fill="none" stroke="#e3d26b" stroke-width="2.800"/>
              <g font-size="11" fill="#666">
                <g text-anchor="end"><text x="2007" y="827">20K</text><text x="2007" y="876">15K</text><text x="2007" y="925">10K</text><text x="2007" y="974">5K</text><text x="2007" y="1022">0K</text></g>
                <text x="2571" y="827">3.0</text><text x="2571" y="905">2.8</text><text x="2571" y="984">2.6</text>
                <g text-anchor="middle"><text x="2061" y="1043">Manager</text><text x="2118" y="1043">Research</text><text x="2118" y="1058">Director</text><text x="2175" y="1043">Healthc...</text><text x="2175" y="1058">Represe...</text><text x="2232" y="1043">Manufa...</text><text x="2232" y="1058">Director</text><text x="2289" y="1043">Sales</text><text x="2289" y="1058">Executive</text><text x="2346" y="1043">Human</text><text x="2346" y="1058">Resourc...</text><text x="2403" y="1043">Laborat...</text><text x="2403" y="1058">Technici...</text><text x="2460" y="1043">Research</text><text x="2460" y="1058">Scientist</text><text x="2516" y="1043">Sales</text><text x="2516" y="1058">Represe...</text></g>
              </g>
              <g fill="#252423" text-anchor="middle" font-weight="500" font-size="13" class="font-['Roboto',sans-serif]"><text transform="translate(1981 920) rotate(-90)">Average of MonthlyIncome</text><text transform="translate(2606 920) rotate(-90)">Average of JobSatisfaction</text><text x="2289" y="1071">JobRole</text></g>
            </svg>
          </div>
          <div class="grid flex-1 grid-cols-[minmax(0,305fr)_minmax(0,342fr)] bg-[#d8fdd0] pb-[46px]">
            <p class="pt-[7px] pl-1.5 font-['Lato',sans-serif] text-[13px] whitespace-nowrap">Employees who need to frequently travel have a<br>tendency to change jobs.<br><br>In particular, sales executive travel the most and<br>have almost 40% leaving the company</p>
            <table class="mt-[5px] h-[233px] w-full table-fixed bg-white leading-[17px]">
              <colgroup><col class="w-[241px]"><col class="w-[101px]"></colgroup>
              <thead><tr class="h-[45px] border-b border-[#3a96e8] bg-[#bde093] text-left align-top"><th class="pt-[2px] pl-[5px] font-normal">JobRole</th><th class="pt-[2px] pl-1.5 font-normal whitespace-nowrap">Average of<br>BusinessTravel<svg class="block h-[5px] w-2" viewBox="0 0 8 5"><path d="M0 0h8l-4 5z"/></svg></th></tr></thead>
              <tbody>
                <tr><th class="border-r border-[#7db9ee] pl-[5px] text-left font-normal">Human Resources</th><td class="bg-[#53bf79] pr-[5px] text-right">1.31</td></tr>
                <tr class="bg-[#ececec]"><th class="border-r border-[#7db9ee] pl-[5px] text-left font-normal">Sales Representative</th><td class="bg-[#58c27e] pr-[5px] text-right">1.29</td></tr>
                <tr><th class="border-r border-[#7db9ee] pl-[5px] text-left font-normal">Research Director</th><td class="bg-[#63c787] pr-[5px] text-right">1.26</td></tr>
                <tr class="bg-[#ececec]"><th class="border-r border-[#7db9ee] pl-[5px] text-left font-normal">Research Scientist</th><td class="bg-[#80d39d] pr-[5px] text-right">1.19</td></tr>
                <tr><th class="border-r border-[#7db9ee] pl-[5px] text-left font-normal">Laboratory Technician</th><td class="bg-[#91d9aa] pr-[5px] text-right">1.15</td></tr>
                <tr class="bg-[#ececec]"><th class="border-r border-[#7db9ee] pl-[5px] text-left font-normal">Healthcare Representative</th><td class="bg-[#a0dfb5] pr-[5px] text-right">1.11</td></tr>
                <tr><th class="border-r border-[#7db9ee] pl-[5px] text-left font-normal">Manufacturing Director</th><td class="bg-[#b8e8c8] pr-[5px] text-right">1.05</td></tr>
                <tr class="bg-[#ececec]"><th class="border-r border-[#7db9ee] pl-[5px] text-left font-normal">Sales Executive</th><td class="bg-[#c3eed1] pr-[5px] text-right">1.02</td></tr>
                <tr><th class="border-r border-[#7db9ee] pl-[5px] text-left font-normal">Manager</th><td class="bg-[#dbf5e3] pr-[5px] text-right">0.96</td></tr>
                <tr class="font-bold"><th class="border-r border-[#7db9ee] pl-[5px] text-left">Total</th><td class="pr-[5px] text-right">1.12</td></tr>
              </tbody>
            </table>
          </div>
        </div>
      </div>
    </div>

    <aside class="flex flex-col font-['Roboto',sans-serif] text-[12px]">
      <div class="flex flex-col items-center gap-1 rounded-[26px] border border-[#555] bg-[#f6f4c0] py-3">
        <h3 class="w-full pl-5 text-[10px] leading-[14px]">Attrition_desc</h3>
        <button class="h-[78px] w-[73px] border border-[#a98263] bg-[#eea588] font-black text-[#222]">False</button>
        <button class="h-[78px] w-[73px] border border-[#a98263] bg-[#eea588] font-black text-[#222]">True</button>
      </div>
      <div class="flex flex-col items-center gap-1 rounded-[26px] border border-[#555] bg-[#f6f4c0] py-3">
        <h3 class="w-full pl-5 text-[10px] leading-[14px]">overtime_desc</h3>
        <button class="h-[86px] w-[73px] border border-[#a98263] bg-[#eea588] font-black text-[#222]">False</button>
        <button class="h-[86px] w-[73px] border border-[#555] bg-[#333] font-black text-white">True</button>
      </div>
      <div class="flex-1 bg-[#d8fdd0]"></div>
    </aside>
  </section>

  <p class="mt-[240px] pl-[45px] text-[58px] leading-[72px] whitespace-nowrap text-black">Employees with higher education background are<br>more likely to resign is they were involved in<br>mundane task</p>
</div>
</main>
</body>
</html>
